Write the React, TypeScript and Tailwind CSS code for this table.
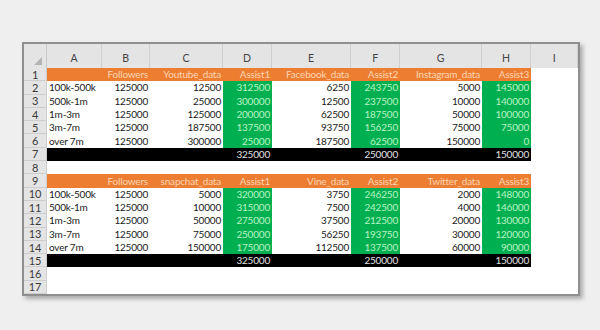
import React from "react";

type Cell = string;

const cols = ["A", "B", "C", "D", "E", "F", "G", "H", "I"];

const block1: Cell[][] = [
  ["", "Followers", "Youtube_data", "Assist1", "Facebook_data", "Assist2", "Instagram_data", "Assist3"],
  ["100k-500k", "125000", "12500", "312500", "6250", "243750", "5000", "145000"],
  ["500k-1m", "125000", "25000", "300000", "12500", "237500", "10000", "140000"],
  ["1m-3m", "125000", "125000", "200000", "62500", "187500", "50000", "100000"],
  ["3m-7m", "125000", "187500", "137500", "93750", "156250", "75000", "75000"],
  ["over 7m", "125000", "300000", "25000", "187500", "62500", "150000", "0"],
  ["", "", "", "325000", "", "250000", "", "150000"],
];

const block2: Cell[][] = [
  ["", "Followers", "snapchat_data", "Assist1", "Vine_data", "Assist2", "Twitter_data", "Assist3"],
  ["100k-500k", "125000", "5000", "320000", "3750", "246250", "2000", "148000"],
  ["500k-1m", "125000", "10000", "315000", "7500", "242500", "4000", "146000"],
  ["1m-3m", "125000", "50000", "275000", "37500", "212500", "20000", "130000"],
  ["3m-7m", "125000", "75000", "250000", "56250", "193750", "30000", "120000"],
  ["over 7m", "125000", "150000", "175000", "112500", "137500", "60000", "90000"],
  ["", "", "", "325000", "", "250000", "", "150000"],
];

// row kind: h = orange header, d = data, t = black total, e = empty
type Kind = "h" | "d" | "t" | "e";

const rows: { kind: Kind; cells: Cell[] }[] = [
  ...block1.map((c, i) => ({ kind: (i === 0 ? "h" : i === 6 ? "t" : "d") as Kind, cells: c })),
  { kind: "e", cells: [] },
  ...block2.map((c, i) => ({ kind: (i === 0 ? "h" : i === 6 ? "t" : "d") as Kind, cells: c })),
  { kind: "e", cells: [] },
  { kind: "e", cells: [] },
];

const green = (ci: number) => ci === 3 || ci === 5 || ci === 7;

function cellClass(kind: Kind, ci: number) {
  const align = ci === 0 ? "justify-start pl-[2px]" : "justify-end pr-[2px]";
  if (kind === "h") return `${align} bg-[#ed7d31] text-[#fcd5b4]`;
  if (kind === "t") return `${align} bg-black text-[#e2e2e2]`;
  if (kind === "d" && green(ci)) return `${align} bg-[#00b050] text-[#b9f3c5]`;
  return `${align} bg-white text-[#1a1a1a]`;
}

export default function App() {
  return (
    <div
      className="w-[600px] h-[330px] bg-[#efefef] pt-[42px] pl-[22px]"
      style={{ fontFamily: "Lato, 'Open Sans', sans-serif" }}
    >
      <div className="w-[558px] h-[254px] border-2 border-[#8f8f8f] bg-white shadow-[3px_3px_4px_rgba(0,0,0,0.28)]">
        <div className="grid grid-cols-[23px_55px_48px_73px_49px_79px_49px_82px_49px_1fr] grid-rows-[24px_repeat(17,13.3px)] text-[10px] leading-[13px] tracking-[-0.2px]">
          {/* corner */}
          <div className="bg-[#e4e4e4] border-r border-[#c9c9c9] flex items-end justify-end pr-[4px] pb-[3px]">
            <svg width="8" height="8" viewBox="0 0 8 8">
              <polygon points="8,0 8,8 0,8" fill="#b4b4b4" />
            </svg>
          </div>
          {cols.map((c) => (
            <div
              key={c}
              className="bg-[#e4e4e4] border-r border-[#cfcfcf] flex items-end justify-center pb-[3px] text-[10.5px] text-[#444]"
            >
              {c}
            </div>
          ))}

          {rows.map((r, ri) => (
            <React.Fragment key={ri}>
              <div className="bg-[#e4e4e4] border-r border-b border-[#cdcdcd] flex items-center justify-center text-[11px] text-[#3a3a3a]">
                {ri + 1}
              </div>
              {Array.from({ length: 8 }).map((_, ci) => (
                <div
                  key={ci}
                  className={`flex items-center whitespace-nowrap overflow-hidden ${
                    r.kind === "e" ? "bg-white" : cellClass(r.kind, ci)
                  }`}
                >
                  {r.cells[ci] ?? ""}
                </div>
              ))}
              <div className="bg-white" />
            </React.Fragment>
          ))}
        </div>
      </div>
    </div>
  );
}
